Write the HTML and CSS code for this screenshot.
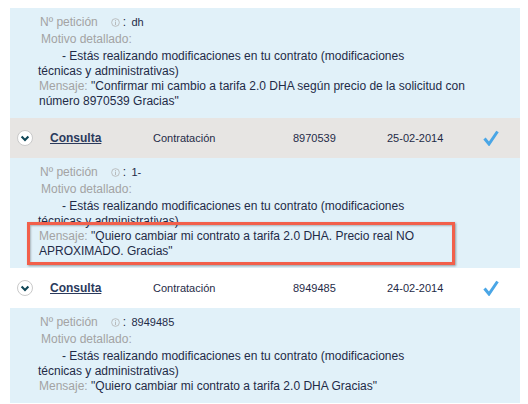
FILE: index.html
```html
<!DOCTYPE html>
<html lang="es">
<head>
<meta charset="utf-8">
<link rel="stylesheet" href="styles.css">
</head>
<body>
<div class="panel">
  <section class="detail">
    <div class="req"><span class="label">Nº petición</span><svg class="info" viewBox="0 0 10 10" width="9" height="9"><circle cx="5" cy="5" r="4.3" fill="none" stroke="#b4b4b4" stroke-width="0.9"/><rect x="4.5" y="2.2" width="1" height="1" fill="#b4b4b4"/><rect x="4.5" y="4" width="1" height="3.8" fill="#b4b4b4"/></svg><span class="colon">:</span> <span class="val">dh</span></div>
    <div class="label motivo">Motivo detallado:</div>
    <p class="reason">- Estás realizando modificaciones en tu contrato (modificaciones técnicas y administrativas)</p>
    <p class="msg"><span class="label">Mensaje:</span> "Confirmar mi cambio a tarifa 2.0 DHA según precio de la solicitud con número 8970539 Gracias"</p>
  </section>
  <div class="row grey">
    <span class="toggle"><svg viewBox="0 0 16 16" width="16" height="16"><circle cx="8" cy="8" r="7.5" fill="#fff" stroke="#c9c9c9"/><path d="M4.6 6.4 L8 9.9 L11.4 6.4" fill="none" stroke="#0f4656" stroke-width="2.1"/></svg></span>
    <a class="type" href="#">Consulta</a>
    <span class="cell">Contratación</span>
    <span class="cell">8970539</span>
    <span class="cell">25-02-2014</span>
    <span class="check"><svg viewBox="0 0 16 16" width="16" height="16"><path d="M1.5 8.5 L6 14 L14.5 1.5" fill="none" stroke="#4aa6e6" stroke-width="3" stroke-linejoin="miter"/></svg></span>
  </div>
  <section class="detail">
    <div class="req"><span class="label">Nº petición</span><svg class="info" viewBox="0 0 10 10" width="9" height="9"><circle cx="5" cy="5" r="4.3" fill="none" stroke="#b4b4b4" stroke-width="0.9"/><rect x="4.5" y="2.2" width="1" height="1" fill="#b4b4b4"/><rect x="4.5" y="4" width="1" height="3.8" fill="#b4b4b4"/></svg><span class="colon">:</span> <span class="val">1-</span></div>
    <div class="label motivo">Motivo detallado:</div>
    <p class="reason">- Estás realizando modificaciones en tu contrato (modificaciones técnicas y administrativas)</p>
    <p class="msg highlight"><span class="label">Mensaje:</span> "Quiero cambiar mi contrato a tarifa 2.0 DHA. Precio real NO APROXIMADO. Gracias"</p>
  </section>
  <div class="row">
    <span class="toggle"><svg viewBox="0 0 16 16" width="16" height="16"><circle cx="8" cy="8" r="7.5" fill="#fff" stroke="#c9c9c9"/><path d="M4.6 6.4 L8 9.9 L11.4 6.4" fill="none" stroke="#0f4656" stroke-width="2.1"/></svg></span>
    <a class="type" href="#">Consulta</a>
    <span class="cell">Contratación</span>
    <span class="cell">8949485</span>
    <span class="cell">24-02-2014</span>
    <span class="check"><svg viewBox="0 0 16 16" width="16" height="16"><path d="M1.5 8.5 L6 14 L14.5 1.5" fill="none" stroke="#4aa6e6" stroke-width="3" stroke-linejoin="miter"/></svg></span>
  </div>
  <section class="detail">
    <div class="req"><span class="label">Nº petición</span><svg class="info" viewBox="0 0 10 10" width="9" height="9"><circle cx="5" cy="5" r="4.3" fill="none" stroke="#b4b4b4" stroke-width="0.9"/><rect x="4.5" y="2.2" width="1" height="1" fill="#b4b4b4"/><rect x="4.5" y="4" width="1" height="3.8" fill="#b4b4b4"/></svg><span class="colon">:</span> <span class="val">8949485</span></div>
    <div class="label motivo">Motivo detallado:</div>
    <p class="reason">- Estás realizando modificaciones en tu contrato (modificaciones técnicas y administrativas)</p>
    <p class="msg"><span class="label">Mensaje:</span> "Quiero cambiar mi contrato a tarifa 2.0 DHA Gracias"</p>
  </section>
</div>
</body>
</html>
```
FILE: styles.css
```css
html, body {
  margin: 0;
  padding: 0;
  background: #fff;
}
body {
  padding: 8px 8px 0 10px;
  font-family: "Liberation Sans", Arial, sans-serif;
  font-size: 12px;
  color: #1f2b47;
}
.panel {
  width: 510px;
}
.detail {
  background: #e1f1f9;
  padding: 6px 20px 9px 28px;
}
.req {
  height: 17px;
  line-height: 17px;
  padding-left: 2px;
  white-space: nowrap;
}
.label {
  color: #a3a3a3;
}
.info {
  display: inline-block;
  vertical-align: -1px;
  margin-left: 13px;
  margin-right: 3px;
}
.colon {
  color: #1f2b47;
}
.val {
  font-size: 11px;
  margin-left: 2px;
}
.motivo {
  height: 17px;
  line-height: 17px;
  padding-left: 3px;
  margin-bottom: 1px;
}
.reason {
  margin: 0;
  line-height: 15px;
  text-indent: 24px;
  width: 400px;
}
.msg {
  margin: 0;
  line-height: 15px;
  width: 452px;
  padding-left: 1px;
}
.highlight {
  position: relative;
}
.highlight::after {
  content: "";
  position: absolute;
  left: -11px;
  top: -7px;
  right: 36px;
  bottom: -6px;
  border: 3px solid #f2604b;
  box-shadow: 1px 1px 2px rgba(0, 0, 0, 0.35), inset 1px 1px 2px rgba(0, 0, 0, 0.25);
  pointer-events: none;
}
.row {
  height: 40px;
  display: grid;
  grid-template-columns: 33px 103px 140px 94px 96px 1fr;
  align-items: center;
  padding-left: 7px;
  background: #fff;
}
.row.grey {
  background: #e7e5e3;
}
.toggle svg, .check svg {
  display: block;
}
.check {
  margin-top: -1px;
}
.type {
  font-weight: bold;
  color: #2b3a5c;
  text-decoration: underline;
  font-size: 12px;
}
.cell {
  font-size: 11px;
  color: #1f2b47;
}
```
